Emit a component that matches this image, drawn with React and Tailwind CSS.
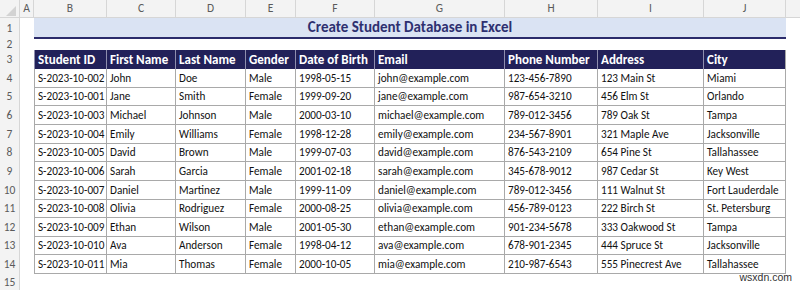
import React from 'react';

const letters = ['B', 'C', 'D', 'E', 'F', 'G', 'H', 'I', 'J'];
const widths = ['w-[73px]', 'w-[69px]', 'w-[70px]', 'w-[50px]', 'w-[79px]', 'w-[130px]', 'w-[93px]', 'w-[106px]', 'w-[82px]'];
const heads = ['Student ID', 'First Name', 'Last Name', 'Gender', 'Date of Birth', 'Email', 'Phone Number', 'Address', 'City'];

// row heights alternate so rows 4-14 fill 69..274 like the sheet
const rowHeights = ['h-[19px]', 'h-[18px]', 'h-[19px]', 'h-[19px]', 'h-[18px]', 'h-[19px]', 'h-[19px]', 'h-[18px]', 'h-[19px]', 'h-[18px]', 'h-[19px]'];

const students = [
    ['S-2023-10-002', 'John', 'Doe', 'Male', '1998-05-15', 'john@example.com', '123-456-7890', '123 Main St', 'Miami'],
    ['S-2023-10-001', 'Jane', 'Smith', 'Female', '1999-09-20', 'jane@example.com', '987-654-3210', '456 Elm St', 'Orlando'],
    ['S-2023-10-003', 'Michael', 'Johnson', 'Male', '2000-03-10', 'michael@example.com', '789-012-3456', '789 Oak St', 'Tampa'],
    ['S-2023-10-004', 'Emily', 'Williams', 'Female', '1998-12-28', 'emily@example.com', '234-567-8901', '321 Maple Ave', 'Jacksonville'],
    ['S-2023-10-005', 'David', 'Brown', 'Male', '1999-07-03', 'david@example.com', '876-543-2109', '654 Pine St', 'Tallahassee'],
    ['S-2023-10-006', 'Sarah', 'Garcia', 'Female', '2001-02-18', 'sarah@example.com', '345-678-9012', '987 Cedar St', 'Key West'],
    ['S-2023-10-007', 'Daniel', 'Martinez', 'Male', '1999-11-09', 'daniel@example.com', '789-012-3456', '111 Walnut St', 'Fort Lauderdale'],
    ['S-2023-10-008', 'Olivia', 'Rodriguez', 'Female', '2000-08-25', 'olivia@example.com', '456-789-0123', '222 Birch St', 'St. Petersburg'],
    ['S-2023-10-009', 'Ethan', 'Wilson', 'Male', '2001-05-30', 'ethan@example.com', '901-234-5678', '333 Oakwood St', 'Tampa'],
    ['S-2023-10-010', 'Ava', 'Anderson', 'Female', '1998-04-12', 'ava@example.com', '678-901-2345', '444 Spruce St', 'Jacksonville'],
    ['S-2023-10-011', 'Mia', 'Thomas', 'Female', '2000-10-05', 'mia@example.com', '210-987-6543', '555 Pinecrest Ave', 'Tallahassee'],
];

const RowNum = ({ n }) => (
    <div className="w-[20px] shrink-0 bg-[#f3f3f3] border-r border-[#d6d6d6] flex items-center justify-center text-[11.5px] text-[#5a5a5a]">
        {n}
    </div>
);

const App = () => {
    return (
        <div className="relative w-[800px] h-[290px] overflow-hidden bg-white text-[#111] [font-family:'Carlito','Liberation_Sans_Narrow','Open_Sans',sans-serif]">
            {/* column letters */}
            <div className="flex h-[18px] bg-[#f3f3f3] border-b border-[#d6d6d6] text-[11.5px] text-[#5a5a5a]">
                <div className="w-[20px] shrink-0 border-r border-[#d6d6d6] flex items-end justify-end pr-[3px] pb-[1px]">
                    <svg width="10" height="10" viewBox="0 0 10 10">
                        <polygon points="10,0 10,10 0,10" fill="#d3d3d3" />
                    </svg>
                </div>
                <div className="w-[14px] shrink-0 border-r border-[#d6d6d6] flex items-center justify-center">A</div>
                {letters.map((l, i) => (
                    <div key={l} className={`${widths[i]} shrink-0 border-r border-[#d6d6d6] flex items-center justify-center`}>{l}</div>
                ))}
                <div className="flex-1" />
            </div>

            {/* row 1: title */}
            <div className="flex h-[21px]">
                <RowNum n={1} />
                <div className="w-[14px] shrink-0" />
                <div className="w-[752px] shrink-0 bg-[#dae3f3] border-b-2 border-[#2b2c6b] flex items-center justify-center text-[15px] font-bold text-[#2e3070]">
                    Create Student Database in Excel
                </div>
            </div>

            {/* row 2 */}
            <div className="flex h-[11px]">
                <RowNum n={2} />
            </div>

            {/* row 3: table header */}
            <div className="flex h-[19px]">
                <RowNum n={3} />
                <div className="w-[14px] shrink-0" />
                {heads.map((h, i) => (
                    <div key={h} className={`${widths[i]} shrink-0 bg-[#222159] text-white font-bold text-[13px] flex items-center px-[3px] border-r border-[#8e8eae] ${i === 0 ? 'border-l' : ''} ${i === heads.length - 1 ? 'border-r-[#a6a6a6]' : ''}`}>
                        {h}
                    </div>
                ))}
            </div>

            {/* data rows */}
            {students.map((row, r) => (
                <div key={row[0]} className={`flex ${rowHeights[r]}`}>
                    <RowNum n={r + 4} />
                    <div className="w-[14px] shrink-0" />
                    {row.map((v, i) => (
                        <div key={i} className={`${widths[i]} shrink-0 border-r border-b border-[#a9a9a9] ${i === 0 ? 'border-l' : ''} flex items-center px-[3px] text-[11.2px] whitespace-nowrap overflow-hidden`}>
                            {v}
                        </div>
                    ))}
                </div>
            ))}

            {/* row 15 */}
            <div className="flex h-[18px]">
                <RowNum n={15} />
            </div>

            <div className="absolute right-[8px] bottom-[4px] text-[10.5px] text-[#333] [font-family:'Liberation_Sans',sans-serif]">wsxdn.com</div>
        </div>
    );
};

export default App;
